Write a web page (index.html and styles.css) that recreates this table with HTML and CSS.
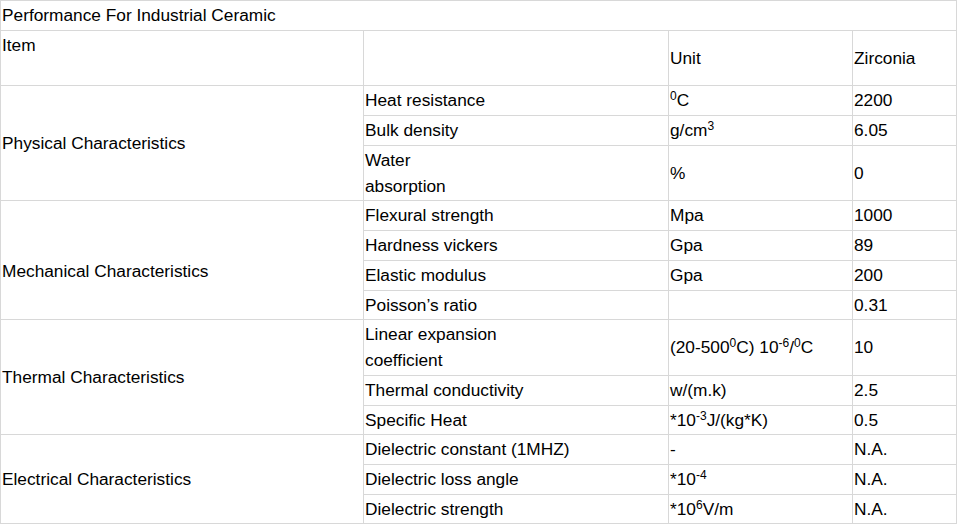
FILE: index.html
```html
<!DOCTYPE html>
<html>
<head>
<meta charset="utf-8">
<link rel="stylesheet" href="styles.css">
</head>
<body>
<table class="perf">
  <colgroup>
    <col class="c1"><col class="c2"><col class="c3"><col class="c4">
  </colgroup>
  <tr><td colspan="4">Performance For Industrial Ceramic</td></tr>
  <tr><td>Item<br>&nbsp;</td><td></td><td>Unit</td><td>Zirconia</td></tr>
  <tr><td rowspan="3">Physical Characteristics</td><td>Heat resistance</td><td><sup>0</sup>C</td><td>2200</td></tr>
  <tr><td>Bulk density</td><td>g/cm<sup>3</sup></td><td>6.05</td></tr>
  <tr><td>Water<br>absorption</td><td>%</td><td>0</td></tr>
  <tr><td rowspan="4" class="low">Mechanical Characteristics</td><td>Flexural strength</td><td>Mpa</td><td>1000</td></tr>
  <tr><td>Hardness vickers</td><td>Gpa</td><td>89</td></tr>
  <tr><td>Elastic modulus</td><td>Gpa</td><td>200</td></tr>
  <tr><td>Poisson’s ratio</td><td></td><td>0.31</td></tr>
  <tr><td rowspan="3">Thermal Characteristics</td><td>Linear expansion<br>coefficient</td><td>(20-500<sup>0</sup>C) 10<sup>-6</sup>/<sup>0</sup>C</td><td>10</td></tr>
  <tr><td>Thermal conductivity</td><td>w/(m.k)</td><td>2.5</td></tr>
  <tr><td>Specific Heat</td><td>*10<sup>-3</sup>J/(kg*K)</td><td>0.5</td></tr>
  <tr><td rowspan="3">Electrical Characteristics</td><td>Dielectric constant (1MHZ)</td><td>-</td><td>N.A.</td></tr>
  <tr><td>Dielectric loss angle</td><td>*10<sup>-4</sup></td><td>N.A.</td></tr>
  <tr><td>Dielectric strength</td><td>*10<sup>6</sup>V/m</td><td>N.A.</td></tr>
</table>
</body>
</html>
```
FILE: styles.css
```css
html, body {
  margin: 0;
  padding: 0;
  background: #ffffff;
}
.perf {
  border-collapse: collapse;
  width: 956px;
  table-layout: fixed;
  font-family: "Liberation Sans", Arial, sans-serif;
  font-size: 17.3px;
  color: #000;
}
.c1 { width: 363px; }
.c2 { width: 305px; }
.c3 { width: 184px; }
.c4 { width: 104px; }
.perf td {
  border: 1px solid #d8d8d8;
  padding: 1px 2px 1.7px 1px;
  line-height: 26px;
  vertical-align: middle;
  text-align: left;
  white-space: nowrap;
}
.perf td.low {
  padding-top: 24px;
}
.perf sup {
  font-size: 12px;
  line-height: 0;
  vertical-align: 6px;
}
```
